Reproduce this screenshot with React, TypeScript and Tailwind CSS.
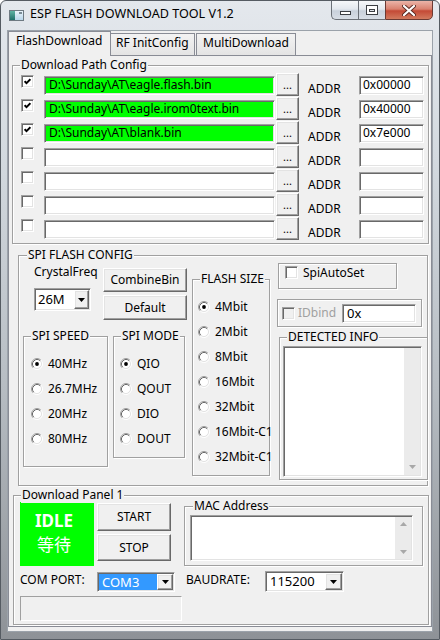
import React from "react";

const FONT = "font-['Noto_Sans','Noto_Sans_CJK_SC',sans-serif]";
const SUNK =
  "border border-t-[#a0a0a0] border-l-[#a0a0a0] border-r-white border-b-white shadow-[inset_1px_1px_0_#696969,inset_-1px_-1px_0_#e3e3e3]";
const RAISED =
  "bg-[#f0f0f0] border border-t-white border-l-white border-r-[#696969] border-b-[#696969] shadow-[inset_-1px_-1px_0_#a0a0a0,inset_1px_1px_0_#e3e3e3]";
const GROUP =
  "relative border border-[#a0a0a0] shadow-[inset_1px_1px_0_#ffffff,1px_1px_0_#ffffff]";

function Legend({ children, cls }: { children: React.ReactNode; cls: string }) {
  return (
    <div className={`absolute -top-[9px] ${cls} bg-[#f0f0f0] px-[1px] leading-[16px] whitespace-nowrap`}>
      {children}
    </div>
  );
}

function Check({ checked, disabled }: { checked?: boolean; disabled?: boolean }) {
  return (
    <div
      className={`w-[13px] h-[13px] shrink-0 ${SUNK} ${disabled ? "bg-[#f0f0f0]" : "bg-white"} flex items-center justify-center`}
    >
      {checked && (
        <svg width="7" height="7" viewBox="0 0 7 7">
          <path d="M0.6 3.2 L2.5 5.2 L6.4 1.2" fill="none" stroke="#000" strokeWidth="1.9" />
        </svg>
      )}
    </div>
  );
}

function Radio({ on }: { on?: boolean }) {
  return (
    <svg width="12" height="12" viewBox="0 0 12 12" className="shrink-0">
      <circle cx="6" cy="6" r="4.5" fill="#fff" />
      <path d="M2.11 9.89 A5.5 5.5 0 0 1 9.89 2.11" fill="none" stroke="#a0a0a0" strokeWidth="1" />
      <path d="M9.89 2.11 A5.5 5.5 0 0 1 2.11 9.89" fill="none" stroke="#ffffff" strokeWidth="1" />
      <path d="M2.82 9.18 A4.5 4.5 0 0 1 9.18 2.82" fill="none" stroke="#696969" strokeWidth="1" />
      <path d="M9.18 2.82 A4.5 4.5 0 0 1 2.82 9.18" fill="none" stroke="#e3e3e3" strokeWidth="1" />
      {on && <circle cx="6" cy="6" r="1.9" fill="#000" />}
    </svg>
  );
}

function DropBtn({ cls }: { cls: string }) {
  return (
    <div className={`${RAISED} ${cls} shrink-0 flex items-center justify-center`}>
      <svg width="7" height="4" viewBox="0 0 7 4">
        <path d="M0 0H7L3.5 4Z" fill="#000" />
      </svg>
    </div>
  );
}

function RadioRow({ label, on }: { label: string; on?: boolean }) {
  return (
    <div className="h-[25px] flex items-center">
      <Radio on={on} />
      <span className="ml-[5px] leading-[16px] whitespace-nowrap">{label}</span>
    </div>
  );
}

function CaptionButtons() {
  return (
    <div className="flex -mt-[1px] mr-[6px] h-[20px]">
      <div className="w-[27px] h-[20px] border border-[#6b7077] border-r-0 rounded-bl-[5px] bg-[linear-gradient(180deg,#f6f8fa_0%,#e3e8ee_45%,#c9d1db_55%,#d8dee6_100%)] flex items-end justify-center pb-[4px]">
        <div className="w-[11px] h-[4px] bg-white border border-[#3c3f44]" />
      </div>
      <div className="w-[27px] h-[20px] border border-[#6b7077] border-r-0 bg-[linear-gradient(180deg,#f6f8fa_0%,#e3e8ee_45%,#c9d1db_55%,#d8dee6_100%)] flex items-center justify-center">
        <div className="w-[12px] h-[10px] border border-[#3c3f44] bg-white flex items-center justify-center">
          <div className="w-[6px] h-[3px] border border-[#3c3f44] bg-[#dfe3e8]" />
        </div>
      </div>
      <div className="w-[48px] h-[20px] border border-[#6b3a33] rounded-br-[5px] bg-[linear-gradient(180deg,#ebb4a8_0%,#d9816f_45%,#c44a36_55%,#d27a5e_100%)] flex items-center justify-center">
        <svg width="14" height="11" viewBox="0 0 14 11">
          <path d="M2 1 L12 10 M12 1 L2 10" stroke="#5a2a22" strokeWidth="4" strokeLinecap="round" />
          <path d="M2 1 L12 10 M12 1 L2 10" stroke="#ffffff" strokeWidth="2.2" strokeLinecap="round" />
        </svg>
      </div>
    </div>
  );
}

function TitleIcon() {
  return (
    <div className="w-[15px] h-[11px] border border-[#6e7a82] bg-white flex">
      <div className="w-[5px] h-full bg-[linear-gradient(180deg,#5fb3a4,#1f6f6a)]" />
      <div className="flex-1 bg-[linear-gradient(180deg,#eaf4fb,#b8d6ea)] flex justify-end items-start pt-[1px] pr-[1px]">
        <div className="w-[3px] h-[2px] bg-[#7b8c96]" />
      </div>
    </div>
  );
}

export default function App() {
  const rows = [
    { c: true, p: "D:\\Sunday\\AT\\eagle.flash.bin", a: "0x00000" },
    { c: true, p: "D:\\Sunday\\AT\\eagle.irom0text.bin", a: "0x40000" },
    { c: true, p: "D:\\Sunday\\AT\\blank.bin", a: "0x7e000" },
    { c: false, p: "", a: "" },
    { c: false, p: "", a: "" },
    { c: false, p: "", a: "" },
    { c: false, p: "", a: "" },
  ];

  return (
    <div className={`w-[440px] h-[640px] ${FONT} text-[12px] text-black`}>
      <div className="w-[440px] h-[640px] flex flex-col border border-[#555b62] rounded-t-[6px] overflow-hidden bg-[linear-gradient(180deg,#e4e8ed_0%,#d3d9df_25%,#b7bdc3_60%,#8e9297_100%)]">
        {/* Title bar */}
        <div className="h-[29px] flex justify-between shrink-0">
          <div className="flex items-start pl-[8px] pt-[9px]">
            <TitleIcon />
            <div className="ml-[6px] -mt-[4px] leading-[16px] text-[12.6px] whitespace-nowrap">
              ESP FLASH DOWNLOAD TOOL V1.2
            </div>
          </div>
          <CaptionButtons />
        </div>

        {/* Client */}
        <div className="ml-[6px] w-[426px] h-[602px] border border-[#9ba2aa] bg-[#f0f0f0] flex flex-col">
          {/* Tabs */}
          <div className="relative z-10 h-[25px] flex items-end">
            <div className="h-[25px] w-[103px] border border-b-0 border-[#898c95] bg-[#f0f0f0] pl-[7px] pt-[1px] leading-[16px] whitespace-nowrap">
              FlashDownload
            </div>
            <div className="h-[22px] mb-[1px] w-[85px] -ml-[1px] border border-b-0 border-[#898c95] bg-[linear-gradient(180deg,#f3f3f3,#e4e4e4)] pl-[5px] pt-[1px] leading-[16px] whitespace-nowrap">
              RF InitConfig
            </div>
            <div className="h-[22px] mb-[1px] w-[100px] ml-[1px] border border-b-0 border-[#898c95] bg-[linear-gradient(180deg,#f3f3f3,#e4e4e4)] pl-[6px] pt-[1px] leading-[16px] whitespace-nowrap">
              MultiDownload
            </div>
          </div>

          {/* Tab panel */}
          <div className="-mt-[1px] h-[572px] border border-[#898c95] bg-[#f0f0f0] flex flex-col">
            {/* Download Path Config */}
            <div className={`${GROUP} ml-[3px] mt-[9px] w-[417px] h-[179px] pl-[8px] pt-[7px]`}>
              <Legend cls="left-[7px]">Download Path Config</Legend>
              {rows.map((r, i) => (
                <div key={i} className="flex items-start h-[24px]">
                  <div className="mt-[2px]">
                    <Check checked={r.c} />
                  </div>
                  <div
                    className={`ml-[10px] mt-[3px] w-[231px] h-[19px] ${SUNK} ${r.p ? "bg-[#00ff00]" : "bg-white"} pl-[4px] leading-[15px] whitespace-nowrap overflow-hidden`}
                  >
                    {r.p}
                  </div>
                  <div className={`${RAISED} ml-[1px] w-[23px] h-[23px] flex items-center justify-center leading-[10px] text-[11px]`}>
                    ...
                  </div>
                  <div className="ml-[9px] w-[51px] mt-[8px] leading-[16px]">ADDR</div>
                  <div className={`${SUNK} bg-white w-[65px] h-[19px] mt-[3px] pl-[3px] leading-[15px]`}>
                    {r.a}
                  </div>
                </div>
              ))}
            </div>

            {/* SPI FLASH CONFIG */}
            <div className={`${GROUP} ml-[9px] mt-[11px] w-[410px] h-[231px] flex`}>
              <Legend cls="left-[8px]">SPI FLASH CONFIG</Legend>
              {/* Column A */}
              <div className="ml-[4px] w-[164px] flex flex-col">
                <div className="h-[80px] flex">
                  <div className="ml-[11px] w-[69px] flex flex-col">
                    <div className="mt-[8px] leading-[16px]">CrystalFreq</div>
                    <div className={`${SUNK} bg-white mt-[8px] w-[57px] h-[23px] p-[1px] flex`}>
                      <div className="flex-1 pl-[2px] leading-[19px] text-[13px]">26M</div>
                      <DropBtn cls="w-[15px] h-full" />
                    </div>
                  </div>
                  <div className="flex flex-col mt-[12px]">
                    <div className={`${RAISED} w-[84px] h-[24px] flex items-center justify-center leading-[16px]`}>
                      CombineBin
                    </div>
                    <div className={`${RAISED} mt-[3px] w-[84px] h-[25px] flex items-center justify-center leading-[16px]`}>
                      Default
                    </div>
                  </div>
                </div>
                <div className="flex items-start">
                  <div className={`${GROUP} w-[85px] h-[131px] pl-[7px] pt-[14px]`}>
                    <Legend cls="left-[7px]">SPI SPEED</Legend>
                    <RadioRow label="40MHz" on />
                    <RadioRow label="26.7MHz" />
                    <RadioRow label="20MHz" />
                    <RadioRow label="80MHz" />
                  </div>
                  <div className={`${GROUP} ml-[5px] w-[72px] h-[122px] pl-[6px] pt-[14px]`}>
                    <Legend cls="left-[7px]">SPI MODE</Legend>
                    <RadioRow label="QIO" on />
                    <RadioRow label="QOUT" />
                    <RadioRow label="DIO" />
                    <RadioRow label="DOUT" />
                  </div>
                </div>
              </div>

              {/* FLASH SIZE */}
              <div className={`${GROUP} ml-[5px] mt-[23px] w-[78px] h-[197px] pl-[5px] pt-[14px]`}>
                <Legend cls="left-[7px]">FLASH SIZE</Legend>
                <RadioRow label="4Mbit" on />
                <RadioRow label="2Mbit" />
                <RadioRow label="8Mbit" />
                <RadioRow label="16Mbit" />
                <RadioRow label="32Mbit" />
                <RadioRow label="16Mbit-C1" />
                <RadioRow label="32Mbit-C1" />
              </div>

              {/* Column C */}
              <div className="ml-[7px] flex flex-col">
                <div className={`${GROUP} ml-[1px] mt-[7px] w-[119px] h-[26px] flex items-start pl-[6px] pt-[2px]`}>
                  <Check />
                  <span className="ml-[5px] leading-[14px]">SpiAutoSet</span>
                </div>
                <div className={`${GROUP} mt-[10px] w-[145px] h-[28px] flex items-center pl-[4px]`}>
                  <Check disabled />
                  <span className="ml-[3px] w-[44px] leading-[16px] text-[#a0a0a0]">IDbind</span>
                  <div className={`${SUNK} bg-white w-[74px] h-[19px] pl-[4px] leading-[16px] text-[13px]`}>0x</div>
                </div>
                <div className={`${GROUP} ml-[2px] mt-[10px] w-[149px] h-[143px] pl-[3px] pt-[8px]`}>
                  <Legend cls="left-[7px]">DETECTED INFO</Legend>
                  <div className={`${SUNK} bg-white w-[139px] h-[131px] flex justify-end p-[1px]`}>
                    <div className="w-[16px] h-full bg-[#ebebeb] flex flex-col justify-end items-center pb-[6px]">
                      <svg width="7" height="4" viewBox="0 0 7 4">
                        <path d="M0 0H7L3.5 4Z" fill="#a8a8a8" />
                      </svg>
                    </div>
                  </div>
                </div>
              </div>
            </div>

            {/* Download Panel 1 */}
            <div className={`${GROUP} ml-[4px] mt-[9px] w-[416px] h-[130px] flex flex-col`}>
              <Legend cls="left-[7px]">Download Panel 1</Legend>
              <div className="flex items-start">
                <div className="ml-[6px] mt-[6px] w-[74px] h-[64px] bg-[#00ff00] text-white flex flex-col items-center pt-[9px] pr-[6px]">
                  <div className="font-bold text-[17px] leading-[20px]">IDLE</div>
                  <div className="mt-[3px] text-[17px] leading-[22px]">等待</div>
                </div>
                <div className="ml-[3px] mt-[7px] flex flex-col">
                  <div className={`${RAISED} w-[74px] h-[28px] flex items-center justify-center leading-[16px]`}>START</div>
                  <div className={`${RAISED} mt-[3px] w-[74px] h-[27px] flex items-center justify-center leading-[16px]`}>STOP</div>
                </div>
                <div className={`${GROUP} ml-[13px] mt-[10px] w-[239px] h-[60px] pl-[5px] pt-[8px]`}>
                  <Legend cls="left-[8px]">MAC Address</Legend>
                  <div className={`${SUNK} bg-white w-[223px] h-[46px] flex justify-end p-[1px]`}>
                    <div className="w-[16px] h-full bg-[#ebebeb] flex flex-col justify-between items-center py-[5px]">
                      <svg width="7" height="4" viewBox="0 0 7 4">
                        <path d="M0 4H7L3.5 0Z" fill="#a8a8a8" />
                      </svg>
                      <svg width="7" height="4" viewBox="0 0 7 4">
                        <path d="M0 0H7L3.5 4Z" fill="#a8a8a8" />
                      </svg>
                    </div>
                  </div>
                </div>
              </div>
              <div className="flex items-start mt-[5px] h-[21px]">
                <div className="ml-[6px] w-[77px] mt-[1px] leading-[16px] whitespace-nowrap">COM PORT:</div>
                <div className={`${SUNK} bg-white mt-[1px] w-[78px] h-[20px] p-[1px] flex`}>
                  <div className="flex-1 bg-[#3399ff] text-white pl-[3px] leading-[16px] text-[13px]">COM3</div>
                  <DropBtn cls="w-[16px] h-full" />
                </div>
                <div className="ml-[11px] w-[79px] mt-[1px] leading-[16px] whitespace-nowrap">BAUDRATE:</div>
                <div className={`${SUNK} bg-white w-[79px] h-[21px] p-[1px] flex`}>
                  <div className="flex-1 pl-[3px] leading-[17px] text-[13px]">115200</div>
                  <DropBtn cls="w-[17px] h-full" />
                </div>
              </div>
              <div className="ml-[6px] mt-[4px] w-[162px] h-[25px] border border-t-[#a0a0a0] border-l-[#a0a0a0] border-r-white border-b-white" />
            </div>
          </div>
        </div>
      </div>
    </div>
  );
}
